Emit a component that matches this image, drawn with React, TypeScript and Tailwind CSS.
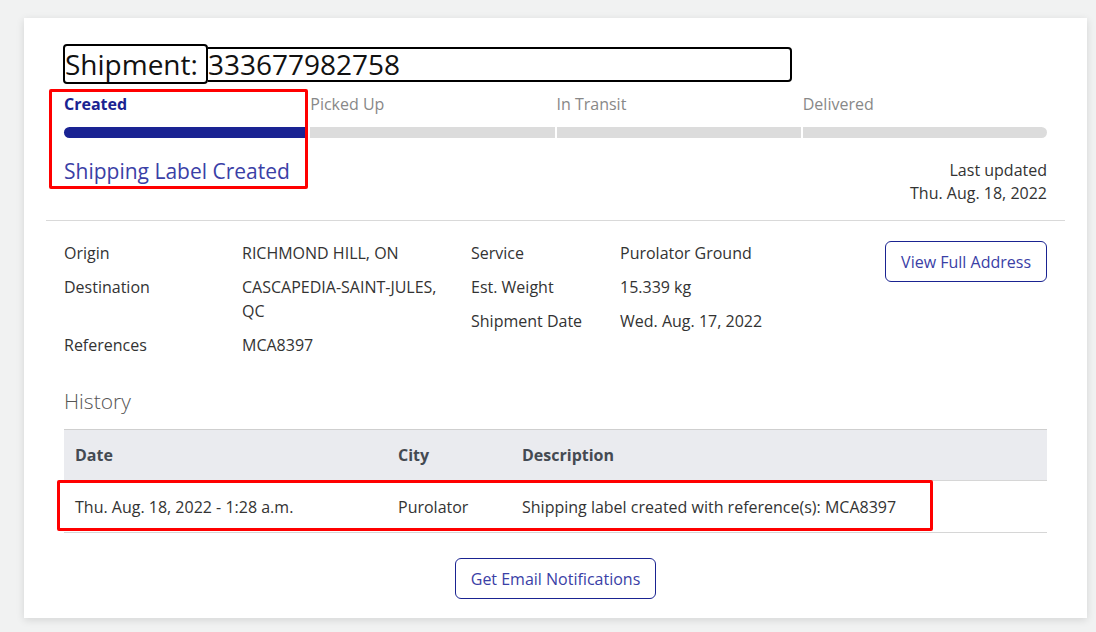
import React from 'react';

const steps = ['Created', 'Picked Up', 'In Transit', 'Delivered'];

const leftDetails = [
  { label: 'Origin', value: 'RICHMOND HILL, ON' },
  { label: 'Destination', value: 'CASCAPEDIA-SAINT-JULES, QC' },
  { label: 'References', value: 'MCA8397' },
];

const rightDetails = [
  { label: 'Service', value: 'Purolator Ground' },
  { label: 'Est. Weight', value: '15.339 kg' },
  { label: 'Shipment Date', value: 'Wed. Aug. 17, 2022' },
];

const DetailList = ({ items, labelWidth, valueWidth }: { items: { label: string; value: string }[]; labelWidth: string; valueWidth: string }) => (
  <div className="flex flex-col gap-[10px]">
    {items.map((it) => (
      <div key={it.label} className="flex">
        <span className={labelWidth}>{it.label}</span>
        <span className={valueWidth}>{it.value}</span>
      </div>
    ))}
  </div>
);

export default function App() {
  return (
    <div
      className="min-h-screen bg-[#f1f2f2] pt-[18px] pl-[24px] text-[#333333]"
      style={{ fontFamily: '"Open Sans", "Liberation Sans", sans-serif' }}
    >
      <div className="w-[1063px] h-[600px] bg-white shadow-[0_2px_8px_rgba(0,0,0,0.12)] px-[40px] pt-[26px]">
        {/* title */}
        <div className="flex items-center w-[729px] -ml-px">
          <span className="h-[40px] border-2 border-black rounded-[4px] flex items-center pr-[8px] text-[28px] leading-none text-[#111]">
            Shipment:
          </span>
          <span className="h-[35px] flex-1 border-2 border-l-0 border-black rounded-r-[4px] flex items-center text-[28px] leading-none text-[#111]">
            333677982758
          </span>
        </div>

        {/* progress */}
        <div className="relative mt-[8px]">
          <div className="grid grid-cols-4 gap-[2px]">
            {steps.map((s, i) => (
              <span
                key={s}
                className={
                  i === 0
                    ? 'text-[16px] leading-[24px] font-bold text-[#1a2391]'
                    : 'text-[16px] leading-[24px] text-[#888888]'
                }
              >
                {s}
              </span>
            ))}
          </div>
          <div className="grid grid-cols-4 gap-[2px] mt-[11px]">
            {steps.map((s, i) => (
              <div
                key={s}
                className={
                  i === 0
                    ? 'h-[11px] bg-[#1a2393] rounded-l-full'
                    : i === 3
                    ? 'h-[11px] bg-[#dcdcdc] rounded-r-full'
                    : 'h-[11px] bg-[#dcdcdc]'
                }
              />
            ))}
          </div>
          <div className="flex justify-between items-start mt-[18px]">
            <span className="text-[21px] leading-[30px] text-[#3a40a6]">Shipping Label Created</span>
            <div className="text-right text-[16px] leading-[23px] text-[#333] pt-[3px]">
              <div>Last updated</div>
              <div>Thu. Aug. 18, 2022</div>
            </div>
          </div>
          <div className="absolute left-[-15px] top-[-3px] w-[259px] h-[100px] border-[3px] border-[#ff0000] rounded-[2px] pointer-events-none" />
        </div>

        <div className="h-px bg-[#d9d9d9] -mx-[18px] mt-[15px]" />

        {/* details */}
        <div className="flex items-start mt-[20px] text-[16px] leading-[24px]">
          <DetailList items={leftDetails} labelWidth="w-[178px]" valueWidth="w-[220px]" />
          <div className="ml-[9px]">
            <DetailList items={rightDetails} labelWidth="w-[149px]" valueWidth="w-[200px]" />
          </div>
          <button className="ml-auto h-[41px] px-[15px] border border-[#1a2391] rounded-[6px] text-[#3a40a6] text-[16px]">
            View Full Address
          </button>
        </div>

        {/* history */}
        <div className="mt-[29px] text-[21px] leading-[30px] text-[#555555] font-light">History</div>
        <div className="relative mt-[13px]">
          <table className="w-full border-collapse text-[16px]">
            <thead>
              <tr className="bg-[#eaebef] border-t border-[#cfcfcf]">
                <th className="h-[51px] text-left font-bold text-[#444a52] pl-[11px] w-[334px]">Date</th>
                <th className="h-[51px] text-left font-bold text-[#444a52] w-[124px]">City</th>
                <th className="h-[51px] text-left font-bold text-[#444a52]">Description</th>
              </tr>
            </thead>
            <tbody>
              <tr className="border-t border-b border-[#d6d6d6]">
                <td className="h-[52px] pl-[11px] text-[#333]">Thu. Aug. 18, 2022 - 1:28 a.m.</td>
                <td className="h-[52px] text-[#333]">Purolator</td>
                <td className="h-[52px] text-[#333]">Shipping label created with reference(s): MCA8397</td>
              </tr>
            </tbody>
          </table>
          <div className="absolute left-[-7px] top-[51px] w-[876px] h-[51px] border-[3px] border-[#ff0000] rounded-[2px] pointer-events-none" />
        </div>

        <div className="flex justify-center mt-[25px]">
          <button className="h-[41px] px-[15px] border border-[#1a2391] rounded-[6px] text-[#3a40a6] text-[16px]">
            Get Email Notifications
          </button>
        </div>
      </div>
    </div>
  );
}
